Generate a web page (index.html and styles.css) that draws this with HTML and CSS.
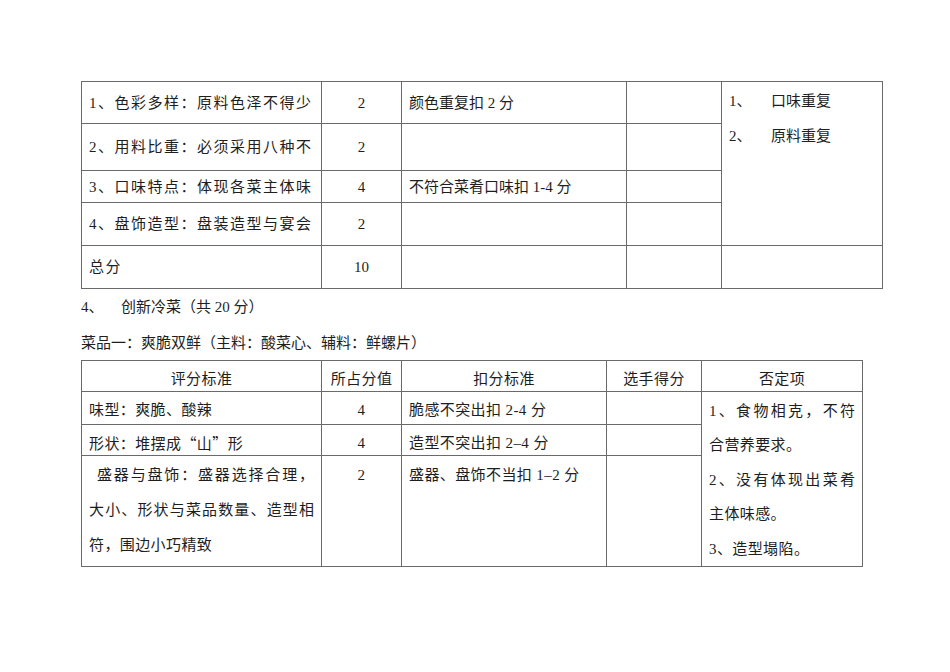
FILE: index.html
```html
<!DOCTYPE html>
<html lang="zh-CN">
<head>
<meta charset="utf-8">
<link rel="stylesheet" href="styles.css">
</head>
<body>
<div class="page">
  <table class="grid grid-top">
    <colgroup>
      <col class="c1"><col class="c2"><col class="c3"><col class="c4"><col class="c5">
    </colgroup>
    <tr class="r1">
      <td class="crit">1、色彩多样：原料色泽不得少</td>
      <td class="num">2</td>
      <td class="ded">颜色重复扣 2 分</td>
      <td></td>
      <td class="neg" rowspan="4">
        <div><span class="idx">1、</span>口味重复</div>
        <div><span class="idx">2、</span>原料重复</div>
      </td>
    </tr>
    <tr class="r2">
      <td class="crit">2、用料比重：必须采用八种不</td>
      <td class="num">2</td>
      <td></td>
      <td></td>
    </tr>
    <tr class="r3">
      <td class="crit">3、口味特点：体现各菜主体味</td>
      <td class="num">4</td>
      <td class="ded">不符合菜肴口味扣 1-4 分</td>
      <td></td>
    </tr>
    <tr class="r4">
      <td class="crit">4、盘饰造型：盘装造型与宴会</td>
      <td class="num">2</td>
      <td></td>
      <td></td>
    </tr>
    <tr class="r5">
      <td class="crit">总分</td>
      <td class="num">10</td>
      <td></td>
      <td></td>
      <td></td>
    </tr>
  </table>

  <p class="line"><span class="sec-no">4、</span>创新冷菜（共 20 分）</p>
  <p class="line line-2">菜品一：爽脆双鲜（主料：酸菜心、辅料：鲜螺片）</p>

  <table class="grid grid-bottom">
    <colgroup>
      <col class="b1"><col class="b2"><col class="b3"><col class="b4"><col class="b5">
    </colgroup>
    <tr class="h">
      <th>评分标准</th>
      <th>所占分值</th>
      <th>扣分标准</th>
      <th>选手得分</th>
      <th>否定项</th>
    </tr>
    <tr class="s1">
      <td>味型：爽脆、酸辣</td>
      <td class="num">4</td>
      <td>脆感不突出扣 2-4 分</td>
      <td></td>
      <td class="multi neg2" rowspan="3">
        <div class="just">1、食物相克，不符</div>
        <div>合营养要求。</div>
        <div class="just">2、没有体现出菜肴</div>
        <div>主体味感。</div>
        <div>3、造型塌陷。</div>
      </td>
    </tr>
    <tr class="s2">
      <td>形状：堆摆成<span class="cjk">“</span>山<span class="cjk">”</span>形</td>
      <td class="num">4</td>
      <td>造型不突出扣 2–4 分</td>
      <td></td>
    </tr>
    <tr class="s3">
      <td class="multi">
        <div class="just indent">盛器与盘饰：盛器选择合理，</div>
        <div class="just">大小、形状与菜品数量、造型相</div>
        <div>符，围边小巧精致</div>
      </td>
      <td class="multi num">2</td>
      <td class="multi">盛器、盘饰不当扣 1–2 分</td>
      <td></td>
    </tr>
  </table>
</div>
</body>
</html>
```

FILE: styles.css
```css
html, body {
  margin: 0;
  padding: 0;
  background: #ffffff;
}

body {
  font-family: "Liberation Serif", "Noto Sans CJK SC", serif;
  font-size: 15px;
  color: #1e1e1e;
}

.page {
  padding: 81px 0 0 81px;
}

.grid {
  border-collapse: collapse;
  table-layout: fixed;
}

.grid td,
.grid th {
  border: 1px solid #6a6a6a;
  padding: 0 7px;
  white-space: nowrap;
  overflow: hidden;
  font-weight: normal;
}

/* ---- top table ---- */
.grid-top {
  width: 801px;
}

.c1 { width: 240px; }
.c2 { width: 80px; }
.c3 { width: 225px; }
.c4 { width: 95px; }
.c5 { width: 161px; }

.grid-top td {
  vertical-align: middle;
  line-height: 20px;
}

.r1 { height: 42px; }
.r2 { height: 47px; }
.r3 { height: 32px; }
.r4 { height: 43px; }
.r5 { height: 43px; }

.crit {
  letter-spacing: 1.5px;
}

.num {
  text-align: center;
}

.grid-top td.neg {
  vertical-align: top;
  padding-top: 2px;
  line-height: 35px;
}

.idx {
  display: inline-block;
  width: 42px;
}

/* ---- headings ---- */
.line {
  margin: 0;
  line-height: 36px;
  height: 36px;
}

.line-2 {
  height: 35px;
}

.sec-no {
  display: inline-block;
  width: 40px;
}

/* ---- bottom table ---- */
.grid-bottom {
  width: 781px;
}

.b1 { width: 240px; }
.b2 { width: 80px; }
.b3 { width: 205px; }
.b4 { width: 95px; }
.b5 { width: 161px; }

.grid-bottom td,
.grid-bottom th {
  vertical-align: top;
  padding-top: 8px;
  line-height: 20px;
  letter-spacing: 0.4px;
}

.grid-bottom th {
  text-align: center;
}

.h { height: 31px; }
.s1 { height: 33px; }
.s2 { height: 31px; }
.s3 { height: 111px; }

.grid-bottom td.multi {
  padding-top: 2px;
  line-height: 35px;
}

.grid-bottom td.neg2 {
  padding-top: 2px;
  line-height: 34.4px;
}

.cjk {
  font-family: "Noto Sans CJK SC", sans-serif;
}

.just {
  text-align: justify;
  text-align-last: justify;
  letter-spacing: 0;
}

.indent {
  padding-left: 8px;
}
```
